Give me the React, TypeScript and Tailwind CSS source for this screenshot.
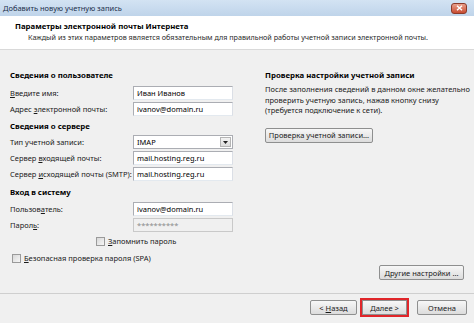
import React from "react";

const font = { fontFamily: '"Noto Sans", "Open Sans", sans-serif' };

function U({ children }: { children: React.ReactNode }) {
  return <span className="underline underline-offset-1">{children}</span>;
}

function Field({ label, value, disabled }: { label: React.ReactNode; value: string; disabled?: boolean }) {
  return (
    <div className="flex h-[16px] items-center">
      <div className="w-[123px] whitespace-nowrap text-[#1a1a1a]">{label}</div>
      <div
        className={
          "flex h-[14px] w-[100px] items-center border px-[3px] " +
          (disabled
            ? "border-[#c9c9c9] bg-[#f0f0f0] text-[#8a8a8a]"
            : "border-[#abadb3] border-b-[#e3e9ef] border-r-[#dbdfe6] bg-white text-black")
        }
      >
        {value}
      </div>
    </div>
  );
}

function Check({ label }: { label: React.ReactNode }) {
  return (
    <div className="flex items-center gap-[3px]">
      <div className="h-[9px] w-[9px] border border-[#9a9a9a] bg-gradient-to-br from-[#d8d8d8] to-[#f6f6f6]" />
      <span className="whitespace-nowrap text-[#1a1a1a]">{label}</span>
    </div>
  );
}

function Btn({ children, className = "" }: { children: React.ReactNode; className?: string }) {
  return (
    <div
      className={
        "flex h-[15px] items-center justify-center whitespace-nowrap rounded-[2px] border border-[#8e8f8f] bg-gradient-to-b from-[#f7f7f7] to-[#dcdcdc] text-[#1a1a1a] " +
        className
      }
    >
      {children}
    </div>
  );
}

function SectionTitle({ children }: { children: React.ReactNode }) {
  return <div className="flex h-[12px] items-center whitespace-nowrap text-[7.8px] font-bold text-black">{children}</div>;
}

export default function App() {
  return (
    <div className="flex h-[323px] w-[474px] flex-col overflow-hidden bg-[#f0f0f0] text-[7.5px] leading-[10px]" style={font}>
      {/* title bar */}
      <div className="flex h-[16px] items-center justify-between bg-gradient-to-b from-[#d3e3f3] to-[#bfd4ea] pl-[3px] pr-[7px]">
        <span className="text-[#1c2f4a]">Добавить новую учетную запись</span>
        <div className="flex h-[11px] w-[16px] items-center justify-center rounded-[3px] border border-[#8b3a2a] bg-gradient-to-b from-[#e9a08c] to-[#c74a30]">
          <svg width="7" height="6" viewBox="0 0 7 6">
            <path d="M1 0.8 L6 5.2 M6 0.8 L1 5.2" stroke="white" strokeWidth="1.5" />
          </svg>
        </div>
      </div>

      {/* header */}
      <div className="flex h-[34px] flex-col border-b border-[#d9d9d9] bg-white pl-[15px] pt-[5px]">
        <div className="text-[7.8px] font-bold leading-[11px] text-black">Параметры электронной почты Интернета</div>
        <div className="pl-[13px] text-[7.2px] text-[#2a2a2a]">
          Каждый из этих параметров является обязательным для правильной работы учетной записи электронной почты.
        </div>
      </div>

      {/* body */}
      <div className="flex flex-1 pt-[19px]">
        <div className="flex w-[265px] shrink-0 flex-col pl-[10px]">
          <SectionTitle>Сведения о пользователе</SectionTitle>
          <div className="mt-[4px]">
            <Field label={<><U>В</U>ведите имя:</>} value="Иван Иванов" />
            <Field label={<>Адрес <U>э</U>лектронной почты:</>} value="ivanov@domain.ru" />
          </div>
          <div className="mt-[3px]">
            <SectionTitle>Сведения о сервере</SectionTitle>
          </div>
          <div className="mt-[2px]">
            <div className="flex h-[16px] items-center">
              <div className="w-[123px] text-[#1a1a1a]">Тип учетной записи:</div>
              <div className="flex h-[14px] w-[100px] items-center justify-between border border-[#abadb3] bg-white pl-[3px] pr-[1px]">
                <span>IMAP</span>
                <div className="flex h-[10px] w-[11px] items-center justify-center border border-[#b5b5b5] bg-gradient-to-b from-[#f4f4f4] to-[#dcdcdc]">
                  <svg width="5" height="3" viewBox="0 0 5 3">
                    <path d="M0 0 H5 L2.5 3 Z" fill="#222" />
                  </svg>
                </div>
              </div>
            </div>
            <Field label={<>Сервер <U>в</U>ходящей почты:</>} value="mail.hosting.reg.ru" />
            <Field label={<>Сервер <U>и</U>сходящей почты (SMTP):</>} value="mail.hosting.reg.ru" />
          </div>
          <div className="mt-[4px]">
            <SectionTitle>Вход в систему</SectionTitle>
          </div>
          <div className="mt-[3px]">
            <Field label={<>Пользов<U>а</U>тель:</>} value="ivanov@domain.ru" />
            <Field label={<>Парол<U>ь</U>:</>} value="**********" disabled />
          </div>
          <div className="flex h-[16px] items-center pl-[86px]">
            <Check label={<><U>З</U>апомнить пароль</>} />
          </div>
          <div className="mt-[1px] flex h-[16px] items-center pl-[2px]">
            <Check label={<><U>Б</U>езопасная проверка пароля (SPA)</>} />
          </div>
        </div>

        <div className="flex min-w-0 flex-1 flex-col pr-[10px]">
          <SectionTitle>Проверка настройки учетной записи</SectionTitle>
          <div className="mt-[3px] w-[205px] shrink-0 leading-[10.5px] text-[#1a1a1a]">
            После заполнения сведений в данном окне желательно проверить учетную запись, нажав кнопку снизу (требуется подключение к сети).
          </div>
          <Btn className="mt-[12px] w-[108px]">Проверка учетной записи...</Btn>
          <div className="flex-1" />
          <div className="mb-[13px] flex justify-end">
            <Btn className="w-[85px]">Другие настройки ...</Btn>
          </div>
        </div>
      </div>

      {/* footer */}
      <div className="flex h-[30px] items-center justify-end border-t border-[#cfcfcf] pr-[7px] pb-[2px]">
        <Btn className="w-[47px]">&lt;&nbsp;<U>Н</U>азад</Btn>
        <div className="ml-[3px] flex h-[19px] w-[49px] items-center justify-center border-2 border-[#e0262a]">
          <Btn className="h-[13px] w-[45px] rounded-none">
            <U>Д</U>алее &gt;
          </Btn>
        </div>
        <Btn className="ml-[8px] w-[50px]">Отмена</Btn>
      </div>
    </div>
  );
}
